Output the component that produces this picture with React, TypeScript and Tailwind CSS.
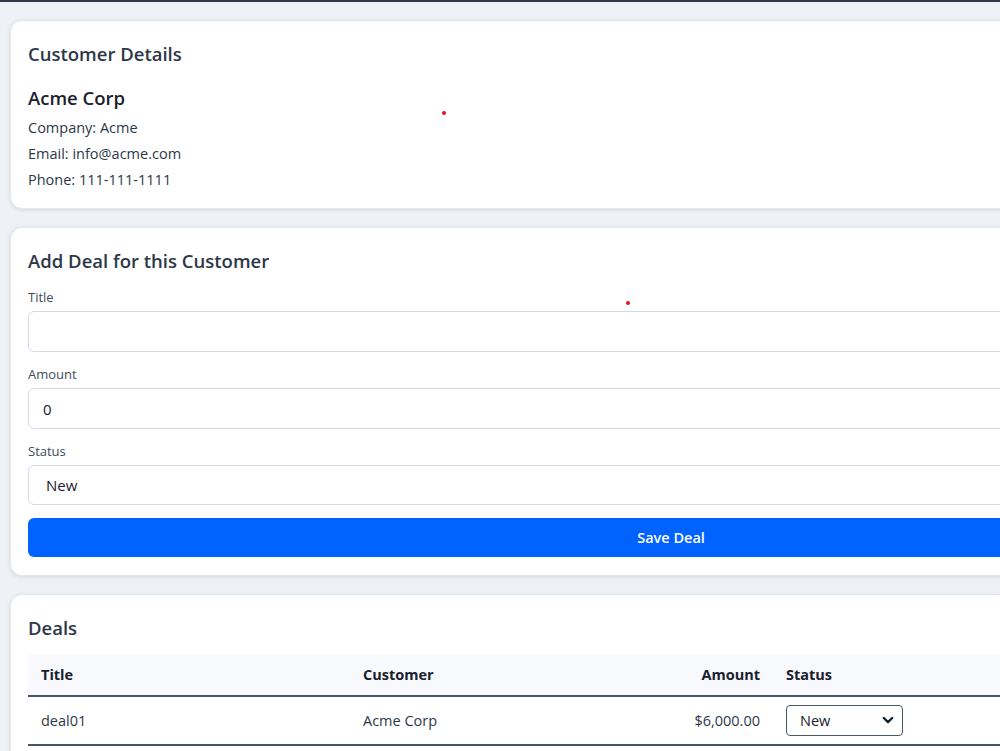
import React from "react";

const font = { fontFamily: '"Open Sans", "Noto Sans", Arial, sans-serif' };

function Card({ children, className = "" }: { children: React.ReactNode; className?: string }) {
  return (
    <section
      className={`bg-white rounded-[12px] border border-[#e3e8ef] shadow-[0_1px_4px_rgba(30,41,59,0.12)] px-[17px] ${className}`}
    >
      {children}
    </section>
  );
}

function Field({ label, children }: { label: string; children: React.ReactNode }) {
  return (
    <div className="flex flex-col">
      <label className="text-[13px] leading-[18px] text-[#3f4a5a] mb-[5px]">{label}</label>
      {children}
    </div>
  );
}

export default function App() {
  return (
    <div className="w-[1000px] h-[751px] overflow-hidden bg-[#eef2f6] relative" style={font}>
      <div className="h-[2px] bg-[#2d3748]" />
      <main className="w-[1342px] px-[10px] pt-[18px] flex flex-col gap-[18px]">
        <Card className="pt-[20px] pb-[15px]">
          <h2 className="text-[18.5px] leading-[26px] font-semibold text-[#2d3748]">Customer Details</h2>
          <h3 className="mt-[18px] text-[18.5px] leading-[26px] font-semibold text-[#1a202c]">Acme Corp</h3>
          <div className="mt-[4px] text-[14.5px] text-[#2d3748]">
            <p className="leading-[26px]">Company: Acme</p>
            <p className="leading-[26px]">Email: info@acme.com</p>
            <p className="leading-[26px]">Phone: 111-111-1111</p>
          </div>
        </Card>

        <Card className="pt-[20px] pb-[18px]">
          <h2 className="text-[18.5px] leading-[26px] font-semibold text-[#2d3748]">Add Deal for this Customer</h2>
          <div className="mt-[14px] flex flex-col gap-[13px]">
            <Field label="Title">
              <input className="h-[41px] w-full rounded-[6px] border border-[#d2dbe7] px-[14px] text-[15px] outline-none" />
            </Field>
            <Field label="Amount">
              <input
                defaultValue="0"
                className="h-[41px] w-full rounded-[6px] border border-[#d2dbe7] px-[14px] text-[15px] text-[#1a202c] outline-none"
              />
            </Field>
            <Field label="Status">
              <div className="h-[40px] w-full rounded-[6px] border border-[#d2dbe7] px-[17px] flex items-center text-[15px] text-[#1a202c]">
                New
              </div>
            </Field>
            <button className="h-[39px] w-full rounded-[6px] bg-[#0062ff] text-white text-[14.5px] font-semibold">
              Save Deal
            </button>
          </div>
        </Card>

        <Card className="pt-[20px] pb-[40px]">
          <h2 className="text-[18.5px] leading-[26px] font-semibold text-[#2d3748]">Deals</h2>
          <table className="mt-[14px] w-full border-collapse text-[14.5px]">
            <thead>
              <tr className="bg-[#f7f9fc] border-b-2 border-[#4a5568]">
                <th className="w-[322px] h-[41px] px-[13px] text-left font-bold text-[#1a202c]">Title</th>
                <th className="w-[250px] px-[13px] text-left font-bold text-[#1a202c]">Customer</th>
                <th className="w-[173px] px-[13px] text-right font-bold text-[#1a202c]">Amount</th>
                <th className="px-[13px] text-left font-bold text-[#1a202c]">Status</th>
              </tr>
            </thead>
            <tbody>
              <tr className="border-b-2 border-[#4a5568]">
                <td className="h-[49px] px-[13px] text-[#2d3748]">deal01</td>
                <td className="px-[13px] text-[#2d3748]">Acme Corp</td>
                <td className="px-[13px] text-right text-[#2d3748]">$6,000.00</td>
                <td className="px-[13px]">
                  <div className="w-[117px] h-[31px] rounded-[4px] border border-[#4a5568] pl-[13px] pr-[8px] flex items-center justify-between text-[14.5px] text-[#1a202c]">
                    <span>New</span>
                    <svg width="12" height="9" viewBox="0 0 12 9" fill="none">
                      <path d="M1.8 2 L6 6.2 L10.2 2" stroke="#1a202c" strokeWidth="2.4" strokeLinecap="round" strokeLinejoin="round" />
                    </svg>
                  </div>
                </td>
              </tr>
            </tbody>
          </table>
        </Card>
      </main>

      {/* red marker dots */}
      <span className="absolute left-[442px] top-[111px] w-[4px] h-[4px] rounded-full bg-[#e8101a]" />
      <span className="absolute left-[626px] top-[301px] w-[4px] h-[4px] rounded-full bg-[#e8101a]" />
    </div>
  );
}
